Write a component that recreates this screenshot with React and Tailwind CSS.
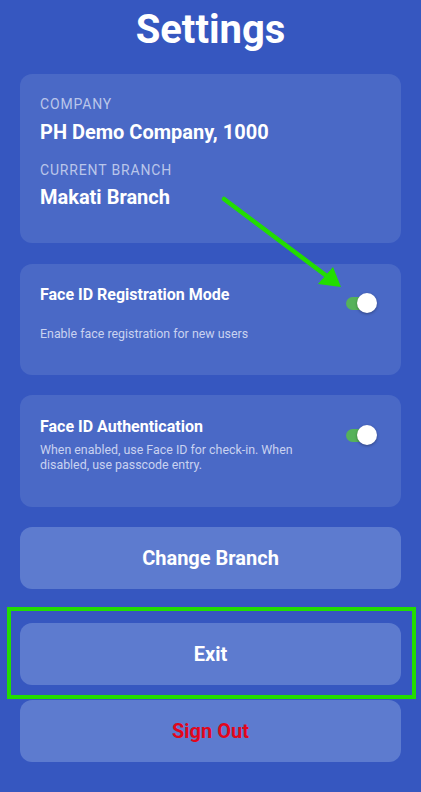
import React, { useState } from 'react';

const Toggle = ({ on, onChange }) => (
  <button
    type="button"
    onClick={() => onChange(!on)}
    className="relative block h-[20px] w-[33px] shrink-0"
    aria-pressed={on}
  >
    <span
      className={`absolute left-0 top-[3.5px] h-[13px] w-[30px] rounded-full ${on ? 'bg-[#55B25A]' : 'bg-[#9aa7d6]'}`}
    />
    <span
      className={`absolute top-0 h-[20px] w-[20px] rounded-full bg-white shadow-[0_1px_3px_rgba(0,0,0,0.35)] ${on ? 'left-[11px]' : 'left-0'}`}
    />
  </button>
);

const App = () => {
  const [registration, setRegistration] = useState(true);
  const [authentication, setAuthentication] = useState(true);

  return (
    <div
      className="relative w-full h-[792px] overflow-hidden bg-[#3657C0] text-white"
      style={{ fontFamily: 'Roboto, "Noto Sans", sans-serif' }}
    >
      <div className="px-5">
        <h1 className="pt-[6px] text-center text-[40px] font-bold leading-[normal]">Settings</h1>

        {/* Company info */}
        <div className="mt-[21px] rounded-xl bg-[#4A69C6] px-5 pt-[22px] pb-[34px]">
          <p className="text-[14px] leading-[normal] tracking-[0.06em] text-[#BAC6EA]">COMPANY</p>
          <p className="mt-2 text-[20px] font-bold leading-[normal]">PH Demo Company, 1000</p>
          <p className="mt-[18px] text-[14px] leading-[normal] tracking-[0.06em] text-[#BAC6EA]">CURRENT BRANCH</p>
          <p className="mt-[7px] text-[20px] font-bold leading-[normal]">Makati Branch</p>
        </div>

        {/* Face ID registration */}
        <div className="mt-[21px] h-[111px] rounded-xl bg-[#4A69C6] px-5 pt-[21px]">
          <div className="flex items-start justify-between">
            <p className="text-[16px] font-bold leading-[normal]">Face ID Registration Mode</p>
            <div className="mt-[8px] mr-[2px] flex">
              <Toggle on={registration} onChange={setRegistration} />
            </div>
          </div>
          <p className="mt-[13px] text-[12.4px] leading-[15px] text-[#C9D2F0]">Enable face registration for new users</p>
        </div>

        {/* Face ID authentication */}
        <div className="mt-[20px] h-[112px] rounded-xl bg-[#4A69C6] px-5 pt-[22px]">
          <div className="flex items-start gap-4">
            <div className="flex-1">
              <p className="text-[16px] font-bold leading-[normal]">Face ID Authentication</p>
              <p className="mt-[7px] text-[12.4px] leading-[14.5px] text-[#C9D2F0]">
                When enabled, use Face ID for check-in. When disabled, use passcode entry.
              </p>
            </div>
            <div className="mt-[8px] mr-[2px] flex">
              <Toggle on={authentication} onChange={setAuthentication} />
            </div>
          </div>
        </div>

        <button className="mt-[20px] flex h-[62px] w-full items-center justify-center rounded-xl bg-[#5D7BCF] text-[20px] font-bold">
          Change Branch
        </button>
        <button className="mt-[34px] flex h-[62px] w-full items-center justify-center rounded-xl bg-[#5D7BCF] text-[20px] font-bold">
          Exit
        </button>
        <button className="mt-[15px] flex h-[62px] w-full items-center justify-center rounded-xl bg-[#5D7BCF] text-[20px] font-bold text-[#E2061B]">
          Sign Out
        </button>
      </div>

      {/* annotation: highlight box */}
      <div className="pointer-events-none absolute left-[7px] top-[607px] h-[92px] w-[409px] border-4 border-[#22DD00]" />

      {/* annotation: arrow */}
      <svg
        className="pointer-events-none absolute left-0 top-0"
        width="421"
        height="792"
        viewBox="0 0 421 792"
      >
        <line x1="224" y1="199" x2="328" y2="277" stroke="#22DD00" strokeWidth="4.5" strokeLinecap="round" />
        <polygon points="341,287 318,284 333,267" fill="#22DD00" />
      </svg>
    </div>
  );
};

export default App;
